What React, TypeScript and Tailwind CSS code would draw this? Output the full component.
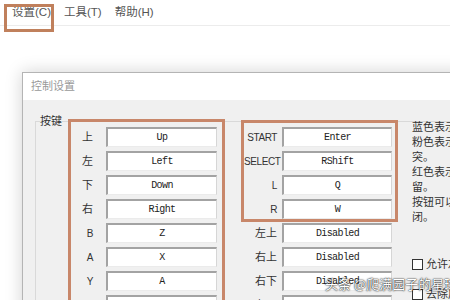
const ORANGE = 'border-[#c8876a]';

const leftRows: [string, string][] = [
  ['上', 'Up'],
  ['左', 'Left'],
  ['下', 'Down'],
  ['右', 'Right'],
  ['B', 'Z'],
  ['A', 'X'],
  ['Y', 'A'],
  ['X', 'S'],
];

const boxedRows: [string, string][] = [
  ['START', 'Enter'],
  ['SELECT', 'RShift'],
  ['L', 'Q'],
  ['R', 'W'],
];

const moreRows: [string, string][] = [
  ['左上', 'Disabled'],
  ['右上', 'Disabled'],
  ['右下', 'Disabled'],
  ['左下', 'Disabled'],
];

const notes = [
  '蓝色表示按键已设置',
  '粉色表示按键设置冲',
  '突。',
  '红色表示按键为系统保',
  '留。',
  '按钮可以开启或关',
  '闭。',
];

function KeyInput({ value, width }: { value: string; width: string }) {
  return (
    <div
      className={`${width} h-[20px] bg-white border-t-2 border-l-2 border-t-[#a3a3a3] border-l-[#a3a3a3] border-r border-b border-r-[#d6d6d6] border-b-[#ebebeb] flex items-center justify-center text-[10px] tracking-[-0.6px] text-[#222] whitespace-pre`}
      style={{ fontFamily: '"Liberation Mono", monospace' }}
    >
      {value}
    </div>
  );
}

function Label({ text, width }: { text: string; width: string }) {
  const latin = /^[A-Z]+$/.test(text);
  return (
    <div
      className={`${width} text-right whitespace-nowrap text-[#333] ${latin ? 'text-[10px] tracking-[-0.4px]' : 'text-[11px]'}`}
    >
      {text}
    </div>
  );
}

export default function App() {
  return (
    <div
      className="relative w-[450px] h-[300px] overflow-hidden bg-white"
      style={{ fontFamily: '"Liberation Sans", "Noto Sans CJK SC", sans-serif' }}
    >
      {/* menu bar */}
      <div className="h-[26px] border-b border-[#ececec] flex items-center pl-[12px] gap-[13px] text-[11.5px] text-[#555]">
        <span>设置(C)</span>
        <span>工具(T)</span>
        <span>帮助(H)</span>
      </div>

      {/* dialog */}
      <div className="ml-[22px] mt-[46px] w-[470px] border border-[#b4b4b4] shadow-[0_0_16px_rgba(0,0,0,0.18)]">
        <div className="h-[27px] bg-white flex items-center px-[8px] text-[11px] text-[#999]">控制设置</div>
        <div className="bg-[#f0f0f0] pl-[12px] pt-[21px] h-[240px]">
          <div className="relative border-t border-l border-[#d9d9d9] h-[200px]">
            <div className="absolute left-[4px] -top-[8px] bg-[#f0f0f0] text-[11px] text-[#333] leading-[14px]">按键</div>
            <div className="flex items-start pl-[32px]">
              {/* column 1 */}
              <div className={`-mt-[3px] border-[3px] ${ORANGE} pt-[5px] pr-[5px] flex flex-col gap-[4px]`}>
                {leftRows.map(([l, v]) => (
                  <div key={l} className="flex items-center">
                    <Label text={l} width="w-[22px]" />
                    <div className="ml-[13px]">
                      <KeyInput value={v} width="w-[111px]" />
                    </div>
                  </div>
                ))}
              </div>

              {/* column 2 */}
              <div className="ml-[16px] -mt-[2px] flex flex-col">
                <div className={`border-[3px] ${ORANGE} pt-[4px] pr-[3px] flex flex-col gap-[4px]`}>
                  {boxedRows.map(([l, v]) => (
                    <div key={l} className="flex items-center">
                      <Label text={l} width="w-[33px]" />
                      <div className="ml-[5px]">
                        <KeyInput value={v} width="w-[110px]" />
                      </div>
                    </div>
                  ))}
                </div>
                <div className="mt-[1px] pl-[3px] flex flex-col gap-[4px]">
                  {moreRows.map(([l, v]) => (
                    <div key={l} className="flex items-center">
                      <Label text={l} width="w-[33px]" />
                      <div className="ml-[5px]">
                        <KeyInput value={v} width="w-[110px]" />
                      </div>
                    </div>
                  ))}
                </div>
              </div>

              {/* notes */}
              <div className="ml-[14px] -mt-[2px] text-[11px] leading-[15px] text-[#333]">
                {notes.map((n, i) => (
                  <div key={i} className="whitespace-nowrap">{n}</div>
                ))}
                <div className="mt-[32px] flex items-center gap-[3px] whitespace-nowrap">
                  <span className="w-[11px] h-[11px] border border-[#333] bg-white" />
                  <span>允许左右同时按下</span>
                </div>
                <div className="mt-[15px] flex items-center gap-[3px] whitespace-nowrap">
                  <span className="w-[11px] h-[11px] border border-[#333] bg-white" />
                  <span>去除屏幕闪烁</span>
                </div>
              </div>
            </div>
          </div>
        </div>
      </div>

      {/* annotation on menu */}
      <div className="absolute left-[4px] top-[4px] w-[50px] h-[28px] border-[3px] border-[#c0805c]" />

      {/* watermark */}
      <div
        className="absolute left-[325px] top-[274px] text-[13px] text-white whitespace-nowrap [text-shadow:0_0_2px_rgba(0,0,0,0.9),0_0_1px_rgba(0,0,0,0.9)]"
        style={{ fontFamily: '"Noto Sans CJK SC", sans-serif' }}
      >
        头条 @爬满园子的星球
      </div>
    </div>
  );
}
